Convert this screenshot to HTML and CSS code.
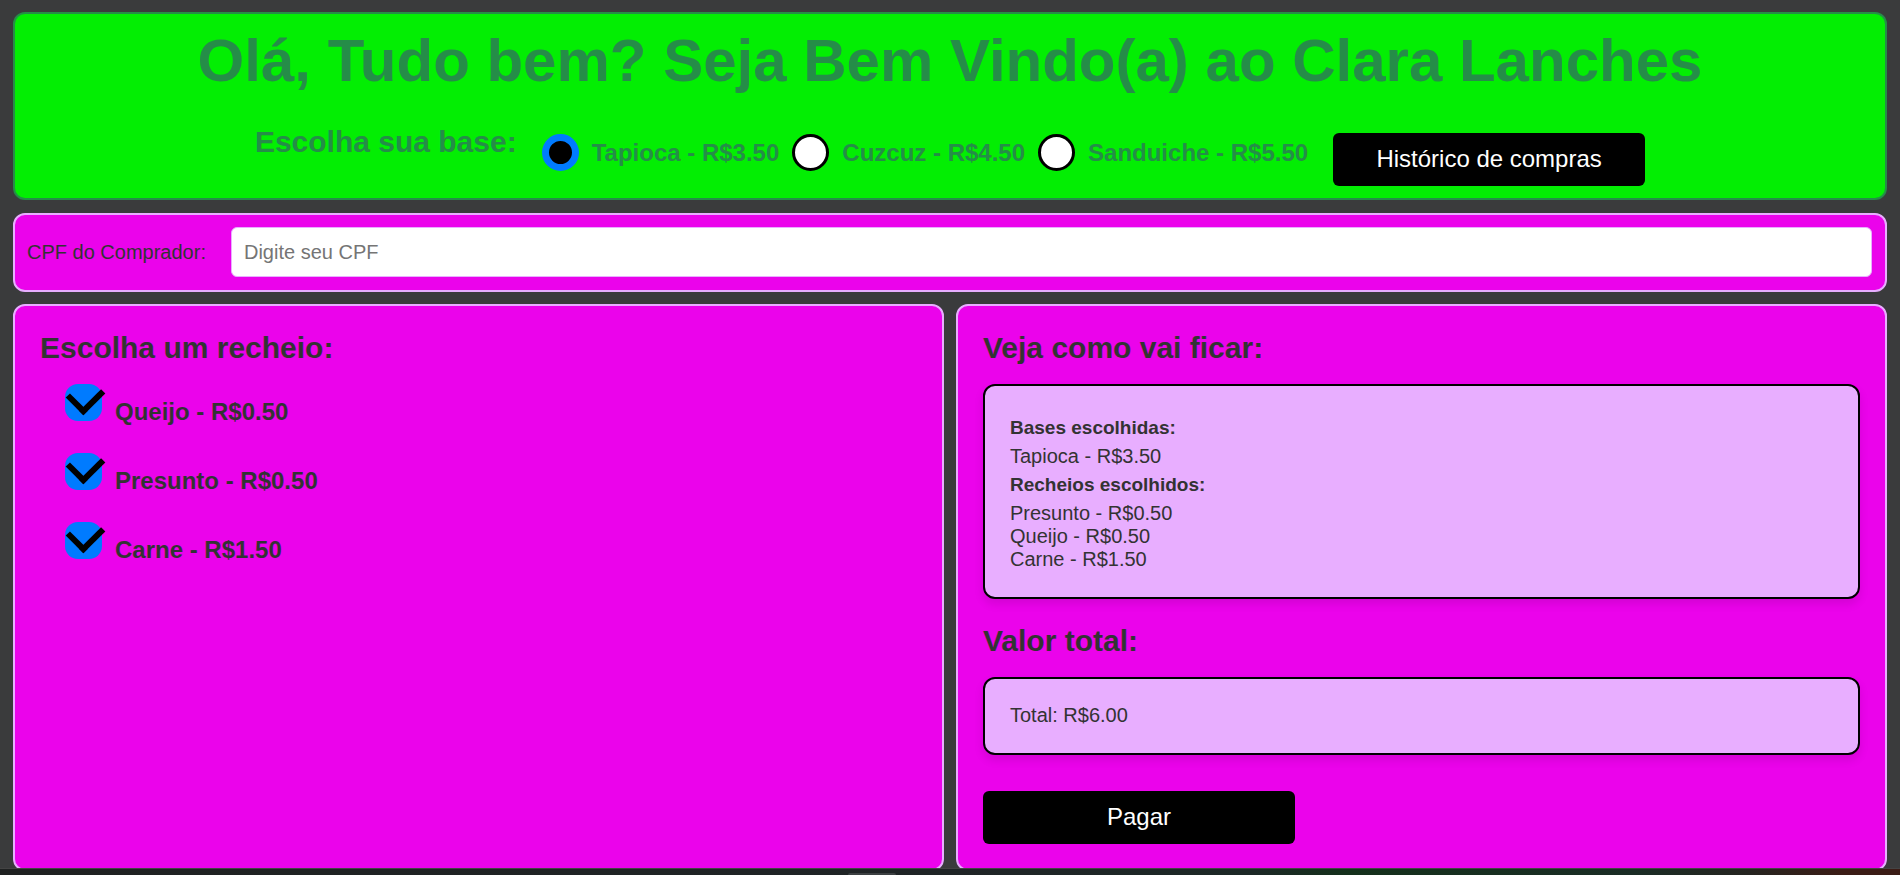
FILE: index.html
```html
<!DOCTYPE html>
<html lang="pt-BR">
<head>
<meta charset="utf-8">
<meta name="viewport" content="width=device-width, initial-scale=1">
<title>Clara Lanches</title>
<link rel="stylesheet" href="styles.css">
</head>
<body>
<header class="header">
  <h1 class="title">Olá, Tudo bem? Seja Bem Vindo(a) ao Clara Lanches</h1>
  <div class="base-row">
    <h2 class="heading">Escolha sua base:</h2>
    <div class="bases">
      <label class="base"><input class="radio" type="radio" name="base" checked>Tapioca - R$3.50</label>
      <label class="base"><input class="radio" type="radio" name="base">Cuzcuz - R$4.50</label>
      <label class="base"><input class="radio" type="radio" name="base">Sanduiche - R$5.50</label>
    </div>
    <button class="button history" type="button">Histórico de compras</button>
  </div>
</header>
<section class="buyer">
  <label for="cpf">CPF do Comprador:</label>
  <input class="cpf" id="cpf" type="text" placeholder="Digite seu CPF">
</section>
<main class="panels">
  <section class="panel">
    <h2 class="heading">Escolha um recheio:</h2>
    <div class="fillings">
      <label class="filling"><input class="check" type="checkbox" checked><span class="filling-name">Queijo - R$0.50</span></label>
      <label class="filling"><input class="check" type="checkbox" checked><span class="filling-name">Presunto - R$0.50</span></label>
      <label class="filling"><input class="check" type="checkbox" checked><span class="filling-name">Carne - R$1.50</span></label>
    </div>
  </section>
  <section class="panel">
    <h2 class="heading">Veja como vai ficar:</h2>
    <div class="box">
      <h3 class="subheading">Bases escolhidas:</h3>
      <div>Tapioca - R$3.50</div>
      <h3 class="subheading">Recheios escolhidos:</h3>
      <div>Presunto - R$0.50</div>
      <div>Queijo - R$0.50</div>
      <div>Carne - R$1.50</div>
    </div>
    <h2 class="heading">Valor total:</h2>
    <div class="box">Total: R$6.00</div>
    <button class="button pay" type="button">Pagar</button>
  </section>
</main>
<div class="taskbar"><div class="taskbar-item"></div></div>
</body>
</html>
```
FILE: styles.css
```css
*,
*::after {
  box-sizing: border-box;
}

body {
  margin: 0;
  padding: 12px 13px 0;
  background: #3a3b3c;
  color: #333;
  font: 20px/23px "Liberation Sans", Arial, sans-serif;
}

h1, h2, h3 {
  margin: 0;
}

.header {
  padding: 12px;
  border: 2px solid #258d48;
  border-radius: 12px;
  background: #03ee03;
  color: #258d48;
}

.title {
  margin-bottom: 30px;
  font-size: 60px;
  line-height: 69px;
  text-align: center;
}

.heading {
  font-size: 30px;
  line-height: 34px;
}

.base-row {
  display: flex;
  justify-content: center;
  align-items: flex-start;
  gap: 25px;
}

.bases {
  display: flex;
  gap: 13px;
  padding-top: 9px;
}

.base {
  display: flex;
  align-items: center;
  gap: 13px;
  font-size: 24px;
  font-weight: bold;
  line-height: 27px;
}

.radio {
  appearance: none;
  flex: none;
  width: 37px;
  height: 37px;
  margin: 0;
  border: 3px solid #000;
  border-radius: 50%;
  background: #fff;
}

.radio:checked {
  border: 7px solid #007bff;
  background: #000;
}

.button {
  display: block;
  width: 312px;
  height: 53px;
  padding: 0 0 2px;
  border: 0;
  border-radius: 6px;
  background: #000;
  color: #fff;
  font: 24px/27px "Liberation Sans", Arial, sans-serif;
}

.history {
  margin-top: 8px;
}

.buyer {
  display: flex;
  align-items: center;
  gap: 25px;
  margin-top: 13px;
  padding: 12px 13px 13px 12px;
  border: 2px solid #e8aeff;
  border-radius: 12px;
  background: #eb03eb;
}

.cpf {
  flex: 1;
  height: 50px;
  padding: 0 12px;
  border: 1px solid #e8aeff;
  border-radius: 6px;
  background: #fff;
  color: #333;
  font: inherit;
}

.cpf::placeholder {
  color: #757575;
}

.panels {
  display: grid;
  grid-template-columns: 1fr 1fr;
  gap: 12px;
  margin-top: 12px;
}

.panel {
  padding: 25px;
  border: 2px solid #e8aeff;
  border-radius: 12px;
  background: #eb03eb;
}

.fillings {
  display: flex;
  flex-direction: column;
  align-items: flex-start;
  gap: 28px;
  margin-top: 19px;
  padding-left: 25px;
}

.filling {
  display: flex;
  align-items: flex-start;
  gap: 13px;
  font-size: 24px;
  font-weight: bold;
  line-height: 27px;
}

.filling-name {
  padding-top: 14px;
}

.check {
  appearance: none;
  position: relative;
  flex: none;
  width: 37px;
  height: 37px;
  margin: 0;
  border: 3px solid #000;
  border-radius: 13px;
  background: #fff;
}

.check:checked {
  border: 0;
  background: #007bff;
}

.check:checked::after {
  content: "";
  position: absolute;
  top: -4px;
  left: 8px;
  width: 25px;
  height: 31px;
  border: solid #000;
  border-width: 0 6px 6px 0;
  transform: rotate(45deg);
}

.box {
  margin: 19px 0 25px;
  padding: 25px 25px 26px;
  border: 2px solid #000;
  border-radius: 12px;
  background: #e8aeff;
  box-shadow: 0 5px 10px rgba(0, 0, 0, 0.1);
}

.subheading {
  margin: 6px 0;
  font-size: 19px;
  line-height: 22px;
}

.pay {
  margin-top: 36px;
}

.taskbar {
  position: fixed;
  right: 0;
  bottom: 0;
  left: 0;
  height: 7px;
  border-top: 1px solid #444;
  background: linear-gradient(90deg, #1f2121 0%, #1f2426 50%, #1c2826 66%, #14301b 71%, #1a2c25 86%, #252420 92%, #3b1c15 97%);
}

.taskbar-item {
  width: 48px;
  height: 2px;
  margin: 4px auto 0 848px;
  border-radius: 2px 2px 0 0;
  background: #3c4042;
}
```
